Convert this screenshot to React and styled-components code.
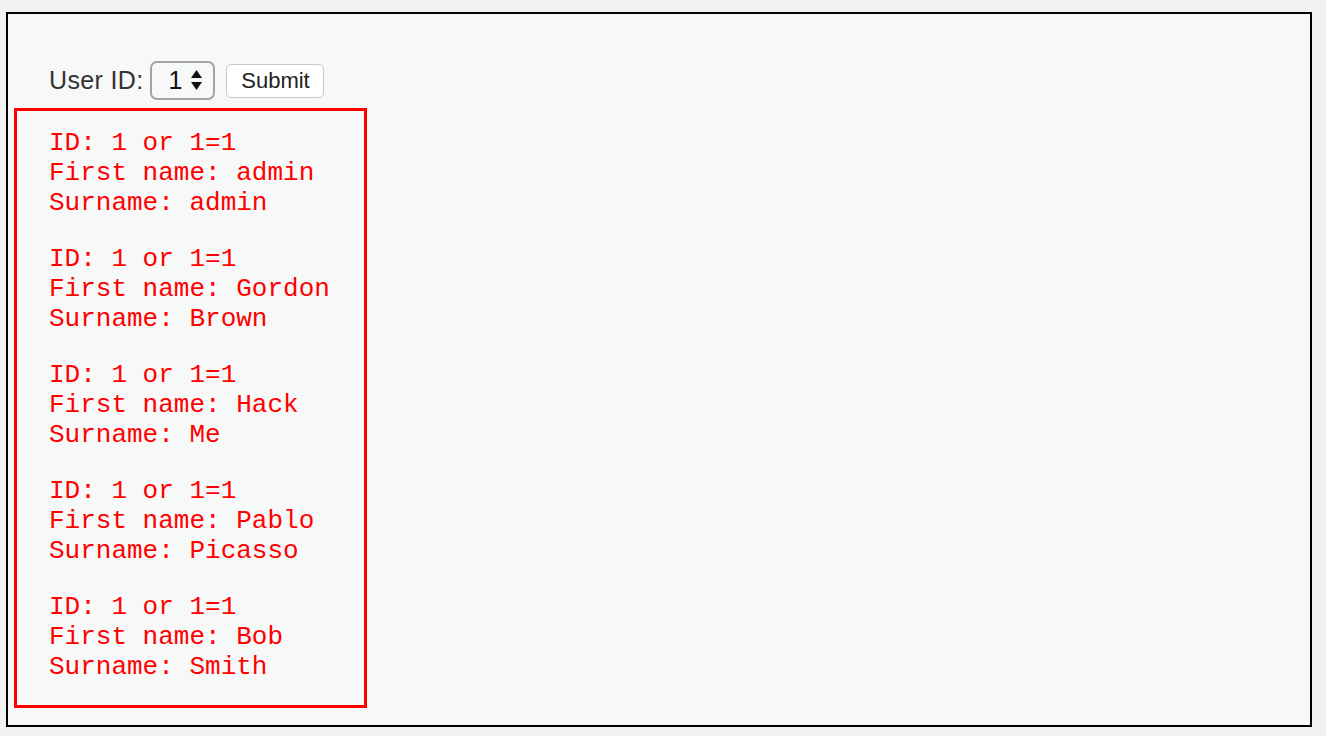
import React from "react";
import styled, {createGlobalStyle} from "styled-components";

const GlobalStyle = createGlobalStyle`
    html, body {
        margin: 0;
        padding: 0;
        background: #f2f2f2;
    }
    body {
        font-family: "Liberation Sans", Arial, sans-serif;
    }
`;

const Frame_SC = styled.div`
    box-sizing: border-box;
    width: 1306px;
    height: 715px;
    margin: 12px 0 0 6px;
    border: 2px solid #000;
    background: #f7f8f8;
    padding: 46px 6px 0 6px;
`;

const Form_SC = styled.form`
    display: flex;
    align-items: center;
    height: 40px;
    margin: 0 0 8px 35px;
    color: #333;
    font-size: 25px;
`;

const Label_SC = styled.label`
    margin-right: 7px;
    letter-spacing: 0.35px;
`;

const Select_SC = styled.div`
    box-sizing: border-box;
    width: 65px;
    height: 39px;
    border: 2px solid #a3a3a3;
    border-radius: 7px;
    display: flex;
    align-items: center;
    padding-left: 16px;
    gap: 8px;
    color: #111;
    font-size: 25px;
    margin-right: 11px;
`;

const Button_SC = styled.button`
    box-sizing: border-box;
    width: 98px;
    height: 34px;
    border: 1px solid #c8c8c8;
    border-radius: 5px;
    background: #fff;
    font-family: "Liberation Sans", Arial, sans-serif;
    font-size: 22px;
    color: #222;
    padding: 0;
    margin-top: 1px;
`;

const Results_SC = styled.div`
    display: inline-block;
    border: 3px solid #ff0000;
    padding: 17px 34px 23px 32px;
`;

const Record_SC = styled.pre`
    margin: 0;
    font-family: "Liberation Mono", "Courier New", monospace;
    font-size: 26px;
    line-height: 30px;
    color: #ff0000;

    & + & {
        margin-top: 26px;
    }
`;

const users = [
    ["admin", "admin"],
    ["Gordon", "Brown"],
    ["Hack", "Me"],
    ["Pablo", "Picasso"],
    ["Bob", "Smith"],
];

const Arrows = () => (
    <svg width="13" height="22" viewBox="0 0 13 22">
        <path d="M6.5 1 L12 9 L1 9 Z" fill="#111" />
        <path d="M6.5 21 L12 13 L1 13 Z" fill="#111" />
    </svg>
);

const App = () => {
    return(
        <>
            <GlobalStyle />
            <Frame_SC>
                <Form_SC onSubmit={(e) => e.preventDefault()}>
                    <Label_SC>User ID:</Label_SC>
                    <Select_SC>
                        <span>1</span>
                        <Arrows />
                    </Select_SC>
                    <Button_SC type="submit">Submit</Button_SC>
                </Form_SC>
                <Results_SC>
                    {users.map(([first, last]) => (
                        <Record_SC key={first}>
                            {`ID: 1 or 1=1\nFirst name: ${first}\nSurname: ${last}`}
                        </Record_SC>
                    ))}
                </Results_SC>
            </Frame_SC>
        </>
    );
};

export default App;
